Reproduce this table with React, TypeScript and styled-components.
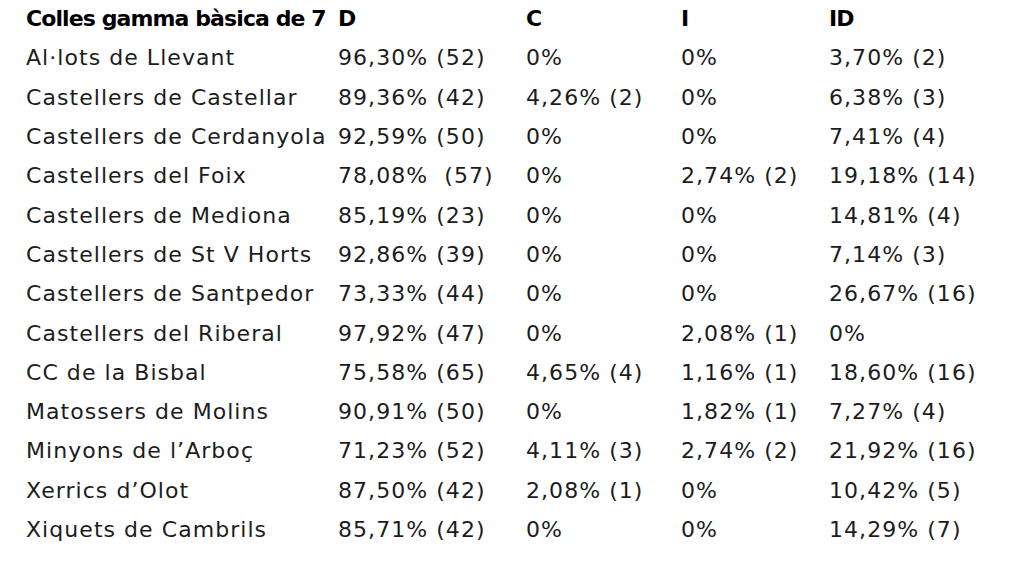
import React from 'react'
import styled, { createGlobalStyle } from 'styled-components'

const GlobalStyle = createGlobalStyle`
  html, body {
    margin: 0;
    padding: 0;
    background: #ffffff;
  }
  body {
    font-family: 'DejaVu Sans', 'Noto Sans', sans-serif;
    color: #1a1a1a;
  }
`

const Page = styled.div`
  width: 1024px;
  height: 561px;
  background: #fff;
  padding: 0 0 0 26px;
  box-sizing: border-box;
  overflow: hidden;
`

const Table = styled.table`
  border-collapse: collapse;
  table-layout: fixed;
  width: 998px;
  margin-top: -1px;
`

const Cell = styled.td<{ $head?: boolean }>`
  padding: 0;
  height: 39.3px;
  white-space: nowrap;
  text-align: left;
  font-size: 22px;
  font-weight: ${(p) => (p.$head ? 700 : 400)};
  letter-spacing: ${(p) => (p.$head ? '-0.9px' : '1.05px')};
  color: ${(p) => (p.$head ? '#000' : '#1c1c1c')};
  vertical-align: middle;
`

const cols = [312, 188, 155, 148, 195]

const header = ['Colles gamma bàsica de 7', 'D', 'C', 'I', 'ID']

const rows: string[][] = [
  ['Al·lots de Llevant', '96,30% (52)', '0%', '0%', '3,70% (2)'],
  ['Castellers de Castellar', '89,36% (42)', '4,26% (2)', '0%', '6,38% (3)'],
  ['Castellers de Cerdanyola', '92,59% (50)', '0%', '0%', '7,41% (4)'],
  ['Castellers del Foix', '78,08%\u00a0 (57)', '0%', '2,74% (2)', '19,18% (14)'],
  ['Castellers de Mediona', '85,19% (23)', '0%', '0%', '14,81% (4)'],
  ['Castellers de St V Horts', '92,86% (39)', '0%', '0%', '7,14% (3)'],
  ['Castellers de Santpedor', '73,33% (44)', '0%', '0%', '26,67% (16)'],
  ['Castellers del Riberal', '97,92% (47)', '0%', '2,08% (1)', '0%'],
  ['CC de la Bisbal', '75,58% (65)', '4,65% (4)', '1,16% (1)', '18,60% (16)'],
  ['Matossers de Molins', '90,91% (50)', '0%', '1,82% (1)', '7,27% (4)'],
  ['Minyons de l’Arboç', '71,23% (52)', '4,11% (3)', '2,74% (2)', '21,92% (16)'],
  ['Xerrics d’Olot', '87,50% (42)', '2,08% (1)', '0%', '10,42% (5)'],
  ['Xiquets de Cambrils', '85,71% (42)', '0%', '0%', '14,29% (7)'],
]

export default function App() {
  return (
    <>
      <GlobalStyle />
      <Page>
        <Table>
          <colgroup>
            {cols.map((w, i) => (
              <col key={i} style={{ width: w }} />
            ))}
          </colgroup>
          <thead>
            <tr>
              {header.map((h) => (
                <Cell as="th" $head key={h}>
                  {h}
                </Cell>
              ))}
            </tr>
          </thead>
          <tbody>
            {rows.map((r) => (
              <tr key={r[0]}>
                {r.map((c, i) => (
                  <Cell key={i}>{c}</Cell>
                ))}
              </tr>
            ))}
          </tbody>
        </Table>
      </Page>
    </>
  )
}
